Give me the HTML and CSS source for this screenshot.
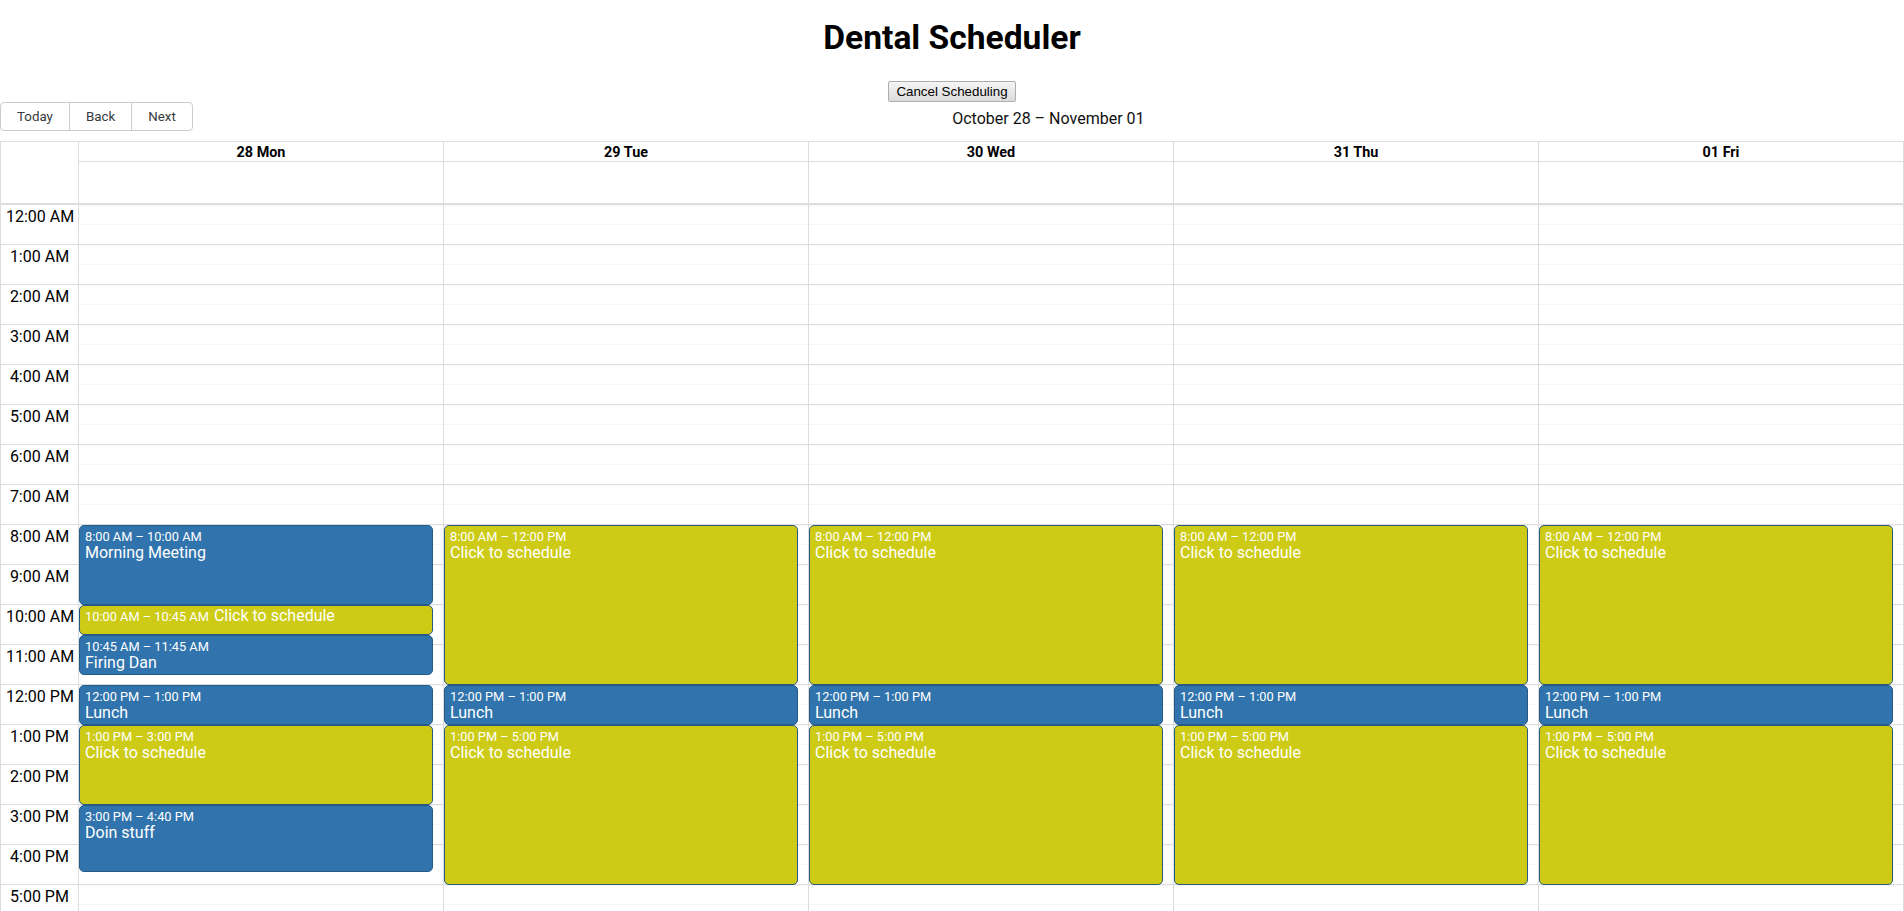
FILE: index.html
```html
<!DOCTYPE html>
<html lang="en">
<head>
<meta charset="utf-8">
<title>Dental Scheduler</title>
<link rel="stylesheet" href="styles.css">
</head>
<body>
<div class="app">
  <h1 class="title">Dental Scheduler</h1>
  <div class="actions"><button class="cancel-btn" type="button">Cancel Scheduling</button></div>
  <div class="calendar">
    <div class="toolbar">
      <span class="btn-group"><button type="button">Today</button><button type="button">Back</button><button type="button">Next</button></span>
      <span class="toolbar-label">October 28 – November 01</span>
    </div>
    <div class="time-view">
      <div class="time-header">
        <div class="header-gutter"></div>
        <div class="header-cell">28 Mon</div>
        <div class="header-cell">29 Tue</div>
        <div class="header-cell">30 Wed</div>
        <div class="header-cell">31 Thu</div>
        <div class="header-cell">01 Fri</div>
        <div class="allday-cell"></div>
        <div class="allday-cell"></div>
        <div class="allday-cell"></div>
        <div class="allday-cell"></div>
        <div class="allday-cell"></div>
      </div>
      <div class="time-content">
        <div class="gutter">
          <div class="group"><span class="label">12:00 AM</span></div>
          <div class="group"><span class="label">1:00 AM</span></div>
          <div class="group"><span class="label">2:00 AM</span></div>
          <div class="group"><span class="label">3:00 AM</span></div>
          <div class="group"><span class="label">4:00 AM</span></div>
          <div class="group"><span class="label">5:00 AM</span></div>
          <div class="group"><span class="label">6:00 AM</span></div>
          <div class="group"><span class="label">7:00 AM</span></div>
          <div class="group"><span class="label">8:00 AM</span></div>
          <div class="group"><span class="label">9:00 AM</span></div>
          <div class="group"><span class="label">10:00 AM</span></div>
          <div class="group"><span class="label">11:00 AM</span></div>
          <div class="group"><span class="label">12:00 PM</span></div>
          <div class="group"><span class="label">1:00 PM</span></div>
          <div class="group"><span class="label">2:00 PM</span></div>
          <div class="group"><span class="label">3:00 PM</span></div>
          <div class="group"><span class="label">4:00 PM</span></div>
          <div class="group"><span class="label">5:00 PM</span></div>
          <div class="group"><span class="label">6:00 PM</span></div>
          <div class="group"><span class="label">7:00 PM</span></div>
          <div class="group"><span class="label">8:00 PM</span></div>
          <div class="group"><span class="label">9:00 PM</span></div>
          <div class="group"><span class="label">10:00 PM</span></div>
          <div class="group"><span class="label">11:00 PM</span></div>
        </div>

        <div class="day">
          <div class="group"></div><div class="group"></div><div class="group"></div><div class="group"></div><div class="group"></div><div class="group"></div>
          <div class="group"></div><div class="group"></div><div class="group"></div><div class="group"></div><div class="group"></div><div class="group"></div>
          <div class="group"></div><div class="group"></div><div class="group"></div><div class="group"></div><div class="group"></div><div class="group"></div>
          <div class="group"></div><div class="group"></div><div class="group"></div><div class="group"></div><div class="group"></div><div class="group"></div>
          <div class="events">
            <div class="event" style="top:320px;height:80px"><span class="event-label">8:00 AM – 10:00 AM</span><span class="event-title">Morning Meeting</span></div>
            <div class="event open short" style="top:400px;height:30px"><span class="event-label">10:00 AM – 10:45 AM</span><span class="event-title">Click to schedule</span></div>
            <div class="event" style="top:430px;height:40px"><span class="event-label">10:45 AM – 11:45 AM</span><span class="event-title">Firing Dan</span></div>
            <div class="event" style="top:480px;height:40px"><span class="event-label">12:00 PM – 1:00 PM</span><span class="event-title">Lunch</span></div>
            <div class="event open" style="top:520px;height:80px"><span class="event-label">1:00 PM – 3:00 PM</span><span class="event-title">Click to schedule</span></div>
            <div class="event" style="top:600px;height:66.67px"><span class="event-label">3:00 PM – 4:40 PM</span><span class="event-title">Doin stuff</span></div>
          </div>
        </div>

        <div class="day">
          <div class="group"></div><div class="group"></div><div class="group"></div><div class="group"></div><div class="group"></div><div class="group"></div>
          <div class="group"></div><div class="group"></div><div class="group"></div><div class="group"></div><div class="group"></div><div class="group"></div>
          <div class="group"></div><div class="group"></div><div class="group"></div><div class="group"></div><div class="group"></div><div class="group"></div>
          <div class="group"></div><div class="group"></div><div class="group"></div><div class="group"></div><div class="group"></div><div class="group"></div>
          <div class="events">
            <div class="event open" style="top:320px;height:160px"><span class="event-label">8:00 AM – 12:00 PM</span><span class="event-title">Click to schedule</span></div>
            <div class="event" style="top:480px;height:40px"><span class="event-label">12:00 PM – 1:00 PM</span><span class="event-title">Lunch</span></div>
            <div class="event open" style="top:520px;height:160px"><span class="event-label">1:00 PM – 5:00 PM</span><span class="event-title">Click to schedule</span></div>
          </div>
        </div>

        <div class="day">
          <div class="group"></div><div class="group"></div><div class="group"></div><div class="group"></div><div class="group"></div><div class="group"></div>
          <div class="group"></div><div class="group"></div><div class="group"></div><div class="group"></div><div class="group"></div><div class="group"></div>
          <div class="group"></div><div class="group"></div><div class="group"></div><div class="group"></div><div class="group"></div><div class="group"></div>
          <div class="group"></div><div class="group"></div><div class="group"></div><div class="group"></div><div class="group"></div><div class="group"></div>
          <div class="events">
            <div class="event open" style="top:320px;height:160px"><span class="event-label">8:00 AM – 12:00 PM</span><span class="event-title">Click to schedule</span></div>
            <div class="event" style="top:480px;height:40px"><span class="event-label">12:00 PM – 1:00 PM</span><span class="event-title">Lunch</span></div>
            <div class="event open" style="top:520px;height:160px"><span class="event-label">1:00 PM – 5:00 PM</span><span class="event-title">Click to schedule</span></div>
          </div>
        </div>

        <div class="day">
          <div class="group"></div><div class="group"></div><div class="group"></div><div class="group"></div><div class="group"></div><div class="group"></div>
          <div class="group"></div><div class="group"></div><div class="group"></div><div class="group"></div><div class="group"></div><div class="group"></div>
          <div class="group"></div><div class="group"></div><div class="group"></div><div class="group"></div><div class="group"></div><div class="group"></div>
          <div class="group"></div><div class="group"></div><div class="group"></div><div class="group"></div><div class="group"></div><div class="group"></div>
          <div class="events">
            <div class="event open" style="top:320px;height:160px"><span class="event-label">8:00 AM – 12:00 PM</span><span class="event-title">Click to schedule</span></div>
            <div class="event" style="top:480px;height:40px"><span class="event-label">12:00 PM – 1:00 PM</span><span class="event-title">Lunch</span></div>
            <div class="event open" style="top:520px;height:160px"><span class="event-label">1:00 PM – 5:00 PM</span><span class="event-title">Click to schedule</span></div>
          </div>
        </div>

        <div class="day">
          <div class="group"></div><div class="group"></div><div class="group"></div><div class="group"></div><div class="group"></div><div class="group"></div>
          <div class="group"></div><div class="group"></div><div class="group"></div><div class="group"></div><div class="group"></div><div class="group"></div>
          <div class="group"></div><div class="group"></div><div class="group"></div><div class="group"></div><div class="group"></div><div class="group"></div>
          <div class="group"></div><div class="group"></div><div class="group"></div><div class="group"></div><div class="group"></div><div class="group"></div>
          <div class="events">
            <div class="event open" style="top:320px;height:160px"><span class="event-label">8:00 AM – 12:00 PM</span><span class="event-title">Click to schedule</span></div>
            <div class="event" style="top:480px;height:40px"><span class="event-label">12:00 PM – 1:00 PM</span><span class="event-title">Lunch</span></div>
            <div class="event open" style="top:520px;height:160px"><span class="event-label">1:00 PM – 5:00 PM</span><span class="event-title">Click to schedule</span></div>
          </div>
        </div>
      </div>
    </div>
  </div>
</div>
</body>
</html>
```
FILE: styles.css
```css
* {
  box-sizing: border-box;
}

html,
body {
  margin: 0;
  padding: 0;
  overflow: hidden;
  background: #fff;
}

body {
  font-family: Roboto, "Liberation Sans", Arial, sans-serif;
  color: #000;
}

.title {
  margin: 18px 0 0;
  font-size: 33.6px;
  line-height: 40px;
  font-weight: 700;
  text-align: center;
}

.actions {
  display: flex;
  justify-content: center;
  margin-top: 23px;
}

.cancel-btn {
  font-family: "Liberation Sans", Arial, sans-serif;
  font-size: 13.33px;
  line-height: 15px;
  padding: 2px 7px;
  margin: 0;
  color: #000;
  border: 1px solid #adadad;
  border-radius: 2px;
  background: linear-gradient(#f5f5f5, #dcdcdc);
}

.calendar {
  height: 820px;
  display: flex;
  flex-direction: column;
}

/* toolbar */
.toolbar {
  display: flex;
  align-items: center;
  margin-bottom: 10px;
  font-size: 16px;
}

.btn-group {
  display: inline-flex;
}

.btn-group button {
  font-family: Roboto, "Liberation Sans", Arial, sans-serif;
  font-size: 13.33px;
  line-height: 15px;
  color: #373a3c;
  background: none;
  border: 1px solid #ccc;
  padding: 6px 16px;
  margin: 0;
  white-space: nowrap;
}

.btn-group button + button {
  margin-left: -1px;
}

.btn-group button:first-child {
  border-radius: 4px 0 0 4px;
}

.btn-group button:last-child {
  border-radius: 0 4px 4px 0;
}

.btn-group button:not(:first-child):not(:last-child) {
  border-radius: 0;
}

.toolbar-label {
  flex: 1;
  padding: 3px 10px 0;
  text-align: center;
  color: #111;
}

/* time view */
.time-view {
  flex: 1;
  min-height: 0;
  display: flex;
  flex-direction: column;
  border: 1px solid #ddd;
}

.time-header {
  display: grid;
  grid-template-columns: 77px repeat(5, 1fr);
}

.header-gutter {
  grid-row: span 2;
}

.header-cell {
  height: 20px;
  padding: 3px 3px 0;
  border-left: 1px solid #ddd;
  border-bottom: 1px solid #ddd;
  font-size: 14.4px;
  line-height: 16px;
  font-weight: 700;
  text-align: center;
  white-space: nowrap;
  overflow: hidden;
}

.allday-cell {
  height: 41px;
  border-left: 1px solid #ddd;
}

.time-content {
  flex: 1;
  min-height: 0;
  overflow: hidden;
  border-top: 2px solid #ddd;
  display: grid;
  grid-template-columns: 77px repeat(5, 1fr);
  align-items: start;
}

.group {
  height: 40px;
  border-bottom: 1px solid #ddd;
}

.gutter .label {
  display: block;
  padding: 0 5px;
  font-size: 16px;
  line-height: 24px;
  text-align: center;
  white-space: nowrap;
}

.day {
  position: relative;
  border-left: 1px solid #ddd;
}

.day .group {
  background:
    linear-gradient(#f7f7f7, #f7f7f7) 0 0 / 100% 1px no-repeat,
    linear-gradient(#f7f7f7, #f7f7f7) 0 19px / 100% 1px no-repeat;
}

.events {
  position: absolute;
  top: 0;
  bottom: 0;
  left: 0;
  right: 10px;
}

.event {
  position: absolute;
  left: 0;
  right: 0;
  display: flex;
  flex-direction: column;
  align-items: flex-start;
  padding: 2px 5px;
  border: 1px solid #265985;
  border-radius: 5px;
  background: #3174ad;
  color: #fff;
  overflow: hidden;
}

.event.open {
  background: #cdcb16;
}

.event.short {
  flex-direction: row;
  align-items: baseline;
}

.event-label {
  font-size: 12.8px;
  line-height: 17px;
  padding-right: 5px;
  white-space: nowrap;
}

.event-title {
  font-size: 16px;
  line-height: 16px;
  white-space: nowrap;
}
```
